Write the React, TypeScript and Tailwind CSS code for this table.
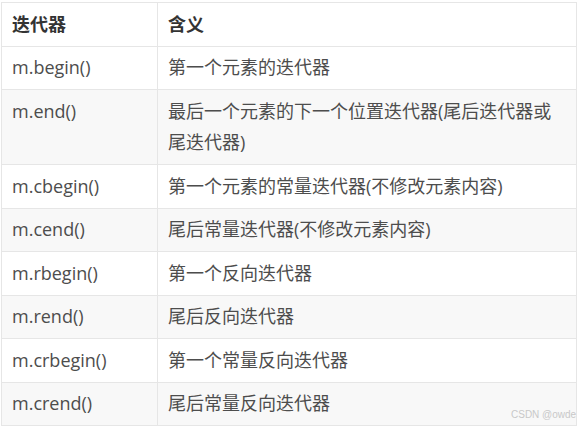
import React from "react";

const rows: [string, string][] = [
  ["m.begin()", "第一个元素的迭代器"],
  ["m.end()", "最后一个元素的下一个位置迭代器(尾后迭代器或尾迭代器)"],
  ["m.cbegin()", "第一个元素的常量迭代器(不修改元素内容)"],
  ["m.cend()", "尾后常量迭代器(不修改元素内容)"],
  ["m.rbegin()", "第一个反向迭代器"],
  ["m.rend()", "尾后反向迭代器"],
  ["m.crbegin()", "第一个常量反向迭代器"],
  ["m.crend()", "尾后常量反向迭代器"],
];

export default function App() {
  return (
    <div
      className="relative w-[579px] h-[427px] bg-white pt-[2px] pl-[1px] overflow-hidden"
      style={{ fontFamily: '"Open Sans", "Noto Sans CJK SC", sans-serif' }}
    >
      <table className="border-collapse w-[576px] text-[18px] leading-[31.5px] text-[#4d4d4d]">
        <thead>
          <tr className="bg-white">
            <th className="border border-[#e6e6e6] w-[156px] py-[5.5px] pl-[10px] text-left font-bold text-[#333]">
              迭代器
            </th>
            <th className="border border-[#e6e6e6] py-[5.5px] pl-[10px] text-left font-bold text-[#333]">
              含义
            </th>
          </tr>
        </thead>
        <tbody>
          {rows.map(([a, b], i) => (
            <tr key={a} className={i % 2 === 1 ? "bg-[#f8f8f8]" : "bg-white"}>
              <td className="border border-[#e6e6e6] py-[5.5px] pl-[10px] align-top">{a}</td>
              <td className="border border-[#e6e6e6] py-[5.5px] pl-[10px] pr-[10px] align-top">{b}</td>
            </tr>
          ))}
        </tbody>
      </table>
      <div
        className="absolute left-[511px] top-[409px] text-[10px] leading-[12px] text-[#c8c8c8] whitespace-nowrap"
        style={{ fontFamily: '"Liberation Sans", sans-serif' }}
      >
        CSDN @owde
      </div>
    </div>
  );
}
